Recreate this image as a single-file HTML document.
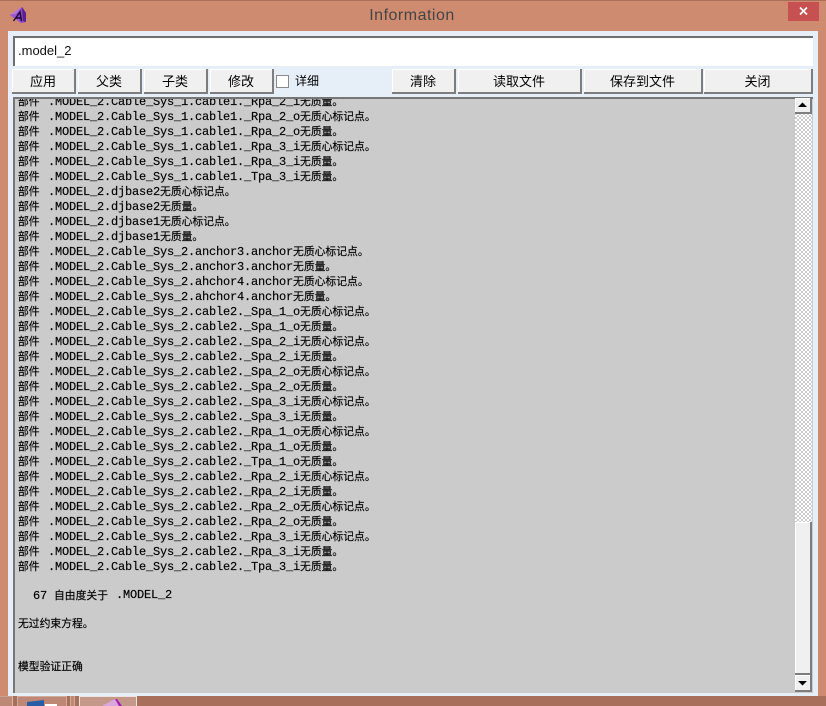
<!DOCTYPE html>
<html><head><meta charset="utf-8"><style>
html,body{margin:0;padding:0;width:826px;height:706px;overflow:hidden;background:#cf8b70;font-family:"Liberation Sans","Noto Sans CJK SC",sans-serif}
div{position:absolute;box-sizing:border-box}
#top{left:0;top:0;width:826px;height:1px;background:#a8705a}
#title{left:-1px;top:6px;width:826px;text-align:center;font-size:16px;line-height:20px;color:#444;letter-spacing:.5px}
#close{left:788px;top:2px;width:31px;height:19px;background:#c75050;color:#fff}
#client{left:8px;top:31px;width:810px;height:665px;background:#e6eef8}
#input{left:13px;top:36px;width:800px;height:30px;background:#fff;border-top:2px solid #6f6f6f;border-left:2px solid #6f6f6f;font-size:13px;line-height:26px;padding-left:3px;color:#111}
.b{top:69px;height:25px;background:#f0f0f0;border-right:2px solid #7d7d7d;border-bottom:2px solid #7d7d7d;box-shadow:inset 1px 1px 0 #fff;text-align:center;font-size:13px;line-height:24px;color:#000;font-family:"Noto Sans CJK SC",sans-serif}
#cb{left:276px;top:75px;width:13px;height:13px;background:#fff;border:1px solid #8a8a8a}
#cbl{left:295px;top:72px;font-size:12px;line-height:18px;color:#000;font-family:"Noto Sans CJK SC",sans-serif}
#list{left:13px;top:97px;width:800px;height:596px;background:#cbcbcb;border-top:2px solid #767676;border-left:2px solid #767676;overflow:hidden}
.r{position:absolute;left:3px;height:15px;white-space:nowrap;font-size:12px;line-height:15px;color:#000;font-family:"Liberation Mono","Noto Sans CJK SC",monospace;letter-spacing:-.2px;-webkit-text-stroke:.15px #000}
.r b{font-weight:normal;font-family:"Noto Sans CJK SC",sans-serif;font-size:10.8px;letter-spacing:0}
.r i{font-style:normal;position:absolute;left:30px;top:0}
#track{left:795px;top:113px;width:17px;height:409px;background:repeating-conic-gradient(#fff 0 25%,#ccc 0 50%) 0 0/4px 4px}
.sb{left:795px;width:17px;background:#f0f0f0;border-right:2px solid #7d7d7d;border-bottom:2px solid #7d7d7d;box-shadow:inset 1px 1px 0 #fff}
#bot{left:0;top:696px;width:826px;height:10px;background:#a8705a}
</style></head><body>
<div id="top"></div>
<svg style="position:absolute;left:10px;top:7px" width="17" height="17" viewBox="0 0 17 17"><path d="M0 8L12 0l4 6v9l-5 1z" fill="#8b45c4"/><path d="M0 8L12 0 6 7z" fill="#b37ae0"/><path d="M12 0l4 6v9l-3-1z" fill="#5a2090"/><path d="M0 8l6-1 5 9z" fill="#9a58d0"/><path d="M3.5 14L10 5l1.5 9M6 11h5" stroke="#1a0a30" stroke-width="1.4" fill="none"/></svg>
<div id="title">Information</div>
<div id="close"><svg width="31" height="19" style="display:block"><path d="M12 5.5l7 7M19 5.5l-7 7" stroke="#fff" stroke-width="1.7"/></svg></div>
<div id="client"></div>
<div id="input">.model_2</div>
<div class="b" style="left:12px;width:64px">应用</div>
<div class="b" style="left:78px;width:64px">父类</div>
<div class="b" style="left:144px;width:64px">子类</div>
<div class="b" style="left:210px;width:64px">修改</div>
<div id="cb"></div><div id="cbl">详细</div>
<div class="b" style="left:392px;width:64px">清除</div>
<div class="b" style="left:458px;width:124px">读取文件</div>
<div class="b" style="left:584px;width:119px">保存到文件</div>
<div class="b" style="left:704px;width:109px">关闭</div>
<div id="list">
<span class="r" style="top:-5px"><b>部件</b><i>.MODEL_2.Cable_Sys_1.cable1._Rpa_2_i<b>无质量。</b></i></span>
<span class="r" style="top:10px"><b>部件</b><i>.MODEL_2.Cable_Sys_1.cable1._Rpa_2_o<b>无质心标记点。</b></i></span>
<span class="r" style="top:25px"><b>部件</b><i>.MODEL_2.Cable_Sys_1.cable1._Rpa_2_o<b>无质量。</b></i></span>
<span class="r" style="top:40px"><b>部件</b><i>.MODEL_2.Cable_Sys_1.cable1._Rpa_3_i<b>无质心标记点。</b></i></span>
<span class="r" style="top:55px"><b>部件</b><i>.MODEL_2.Cable_Sys_1.cable1._Rpa_3_i<b>无质量。</b></i></span>
<span class="r" style="top:70px"><b>部件</b><i>.MODEL_2.Cable_Sys_1.cable1._Tpa_3_i<b>无质量。</b></i></span>
<span class="r" style="top:85px"><b>部件</b><i>.MODEL_2.djbase2<b>无质心标记点。</b></i></span>
<span class="r" style="top:100px"><b>部件</b><i>.MODEL_2.djbase2<b>无质量。</b></i></span>
<span class="r" style="top:115px"><b>部件</b><i>.MODEL_2.djbase1<b>无质心标记点。</b></i></span>
<span class="r" style="top:130px"><b>部件</b><i>.MODEL_2.djbase1<b>无质量。</b></i></span>
<span class="r" style="top:145px"><b>部件</b><i>.MODEL_2.Cable_Sys_2.anchor3.anchor<b>无质心标记点。</b></i></span>
<span class="r" style="top:160px"><b>部件</b><i>.MODEL_2.Cable_Sys_2.anchor3.anchor<b>无质量。</b></i></span>
<span class="r" style="top:175px"><b>部件</b><i>.MODEL_2.Cable_Sys_2.ahchor4.anchor<b>无质心标记点。</b></i></span>
<span class="r" style="top:190px"><b>部件</b><i>.MODEL_2.Cable_Sys_2.ahchor4.anchor<b>无质量。</b></i></span>
<span class="r" style="top:205px"><b>部件</b><i>.MODEL_2.Cable_Sys_2.cable2._Spa_1_o<b>无质心标记点。</b></i></span>
<span class="r" style="top:220px"><b>部件</b><i>.MODEL_2.Cable_Sys_2.cable2._Spa_1_o<b>无质量。</b></i></span>
<span class="r" style="top:235px"><b>部件</b><i>.MODEL_2.Cable_Sys_2.cable2._Spa_2_i<b>无质心标记点。</b></i></span>
<span class="r" style="top:250px"><b>部件</b><i>.MODEL_2.Cable_Sys_2.cable2._Spa_2_i<b>无质量。</b></i></span>
<span class="r" style="top:265px"><b>部件</b><i>.MODEL_2.Cable_Sys_2.cable2._Spa_2_o<b>无质心标记点。</b></i></span>
<span class="r" style="top:280px"><b>部件</b><i>.MODEL_2.Cable_Sys_2.cable2._Spa_2_o<b>无质量。</b></i></span>
<span class="r" style="top:295px"><b>部件</b><i>.MODEL_2.Cable_Sys_2.cable2._Spa_3_i<b>无质心标记点。</b></i></span>
<span class="r" style="top:310px"><b>部件</b><i>.MODEL_2.Cable_Sys_2.cable2._Spa_3_i<b>无质量。</b></i></span>
<span class="r" style="top:325px"><b>部件</b><i>.MODEL_2.Cable_Sys_2.cable2._Rpa_1_o<b>无质心标记点。</b></i></span>
<span class="r" style="top:340px"><b>部件</b><i>.MODEL_2.Cable_Sys_2.cable2._Rpa_1_o<b>无质量。</b></i></span>
<span class="r" style="top:355px"><b>部件</b><i>.MODEL_2.Cable_Sys_2.cable2._Tpa_1_o<b>无质量。</b></i></span>
<span class="r" style="top:370px"><b>部件</b><i>.MODEL_2.Cable_Sys_2.cable2._Rpa_2_i<b>无质心标记点。</b></i></span>
<span class="r" style="top:385px"><b>部件</b><i>.MODEL_2.Cable_Sys_2.cable2._Rpa_2_i<b>无质量。</b></i></span>
<span class="r" style="top:400px"><b>部件</b><i>.MODEL_2.Cable_Sys_2.cable2._Rpa_2_o<b>无质心标记点。</b></i></span>
<span class="r" style="top:415px"><b>部件</b><i>.MODEL_2.Cable_Sys_2.cable2._Rpa_2_o<b>无质量。</b></i></span>
<span class="r" style="top:430px"><b>部件</b><i>.MODEL_2.Cable_Sys_2.cable2._Rpa_3_i<b>无质心标记点。</b></i></span>
<span class="r" style="top:445px"><b>部件</b><i>.MODEL_2.Cable_Sys_2.cable2._Rpa_3_i<b>无质量。</b></i></span>
<span class="r" style="top:460px"><b>部件</b><i>.MODEL_2.Cable_Sys_2.cable2._Tpa_3_i<b>无质量。</b></i></span>
<span class="r" style="top:489px;left:18px">67 <b>自由度关于</b><i style="left:83px">.MODEL_2</i></span>
<span class="r" style="top:517px"><b>无过约束方程。</b></span>
<span class="r" style="top:560px"><b>模型验证正确</b></span>
</div>
<div id="track"></div>
<div class="sb" style="top:98px;height:16px"><svg width="15" height="14" style="display:block"><path d="M3 9h9L7.5 4.5z" fill="#000"/></svg></div>
<div class="sb" style="top:522px;height:153px"></div>
<div class="sb" style="top:675px;height:17px"><svg width="15" height="15" style="display:block"><path d="M3 6h9L7.5 10.5z" fill="#000"/></svg></div>
<div id="bot"></div>
<div style="left:0;top:696px;width:13px;height:10px;background:#bd8876;border-right:1px solid #dcb8a8;border-top:1px solid #c9a090"></div>
<div style="left:17px;top:696px;width:50px;height:10px;background:#bd8876;border:1px solid #d3ab9a;border-bottom:0"></div>
<div style="left:70px;top:696px;width:5px;height:10px;background:#bd8876;border-left:1px solid #d3ab9a;border-right:1px solid #d3ab9a"></div>
<div style="left:79px;top:696px;width:58px;height:10px;background:#c4998a;border:1px solid #efe3dd;border-bottom:0"></div>
<svg style="position:absolute;left:0;top:696px" width="826" height="10"><path d="M27 6l17-2v6H27z" fill="#2a5ca5"/><rect x="45" y="8" width="12" height="2" fill="#fff"/><path d="M102 10l13-7 4 7z" fill="#dba6e0"/><path d="M115 3h2l5 7h-3z" fill="#a61cb0"/></svg>
</body></html>
